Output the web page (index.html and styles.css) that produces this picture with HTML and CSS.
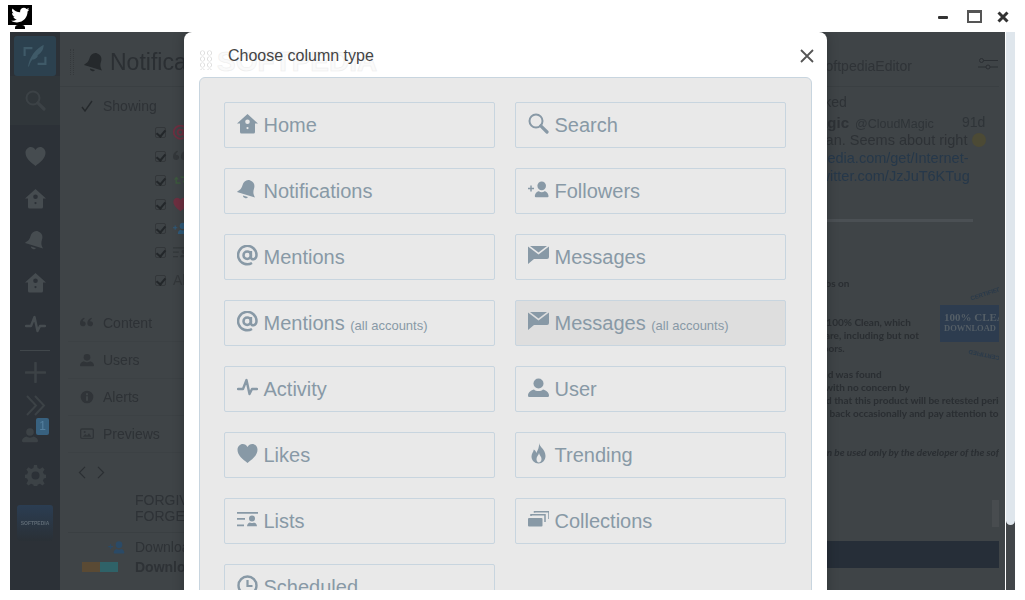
FILE: index.html
```html
<!DOCTYPE html>
<html lang="en">
<head>
<meta charset="utf-8">
<title>TweetDeck</title>
<link rel="stylesheet" href="styles.css">
</head>
<body>
<svg class="defs" aria-hidden="true">
  <symbol id="i-home" viewBox="0 0 21 21"><path fill-rule="evenodd" d="M10.5 1 21 10.5h-3V19a1.500 1.500 0 0 1-1.500 1.500h-12A1.500 1.500 0 0 1 3 19v-8.500H0zM10.500 6.500a2.300 2.300 0 1 0 0 4.600 2.300 2.300 0 0 0 0-4.600zM10.500 14a1.100 1.100 0 1 0 0 2.200 1.100 1.100 0 0 0 0-2.200z"/></symbol>
  <symbol id="i-bell" viewBox="0 0 21 21"><g transform="rotate(17 10.500 10.500)"><path d="M10.500 1c4 0 6 3 6 7 0 4.500 1.500 5.500 3.500 8H1c2-2.500 3.500-3.500 3.500-8 0-4 2-7 6-7z"/><path d="M8 17.500h5a2.500 2 0 0 1-5 0z"/></g></symbol>
  <symbol id="i-search" viewBox="0 0 21 21"><circle cx="8" cy="8" r="6.500" fill="none" stroke="currentColor" stroke-width="2"/><path d="M12.800 12.800 19 19" stroke="currentColor" stroke-width="3.200" stroke-linecap="round"/></symbol>
  <symbol id="i-follow" viewBox="0 0 23 21"><path d="M0 8.500h2.500V6h1.600v2.500h2.500v1.600H4.100v2.500H2.500v-2.500H0z"/><circle cx="15" cy="6.500" r="4.700"/><path d="M7.500 18c0-3.500 3-5.500 4.500-5.500.8.700 1.800 1 3 1s2.200-.3 3-1c1.500 0 4.500 2 4.500 5.500 0 .6-.4 1-1 1h-13c-.6 0-1-.4-1-1z"/></symbol>
  <symbol id="i-at" viewBox="0 0 21 21"><g fill="none" stroke="currentColor" stroke-width="2.500"><circle cx="10.200" cy="10.200" r="3.700"/><path d="M13.900 6v6c0 3.500 5.600 3 5.600-2A9.200 9.200 0 1 0 15 18"/></g></symbol>
  <symbol id="i-msg" viewBox="0 0 21 21"><path d="M2 1h17l-8.500 6.500z"/><path d="M0 1.500 10.500 9.500 21 1.500V12a2 2 0 0 1-2 2H6l-6 5z"/></symbol>
  <symbol id="i-activity" viewBox="0 0 21 21"><path d="M1 12h5l3.500-9 3 14 2.500-5h5" fill="none" stroke="currentColor" stroke-width="2.400" stroke-linecap="round" stroke-linejoin="round"/></symbol>
  <symbol id="i-user" viewBox="0 0 21 21"><circle cx="10.500" cy="6.500" r="5"/><path d="M0 18.500c0-3.500 3.500-5.500 6-6 1 1 2.700 1.500 4.500 1.500s3.500-.5 4.500-1.500c2.500.5 6 2.500 6 6 0 1-.7 1.500-1.500 1.500h-18C.7 20 0 19.500 0 18.500z"/></symbol>
  <symbol id="i-heart" viewBox="0 0 21 21"><path d="M10.500 20C6 16.500.5 12.500.5 6.800.5 3.500 3 1 5.800 1c2 0 3.700 1 4.700 3 1-2 2.700-3 4.700-3 2.800 0 5.300 2.500 5.300 5.800 0 5.700-5.500 9.700-10 13.200z"/></symbol>
  <symbol id="i-flame" viewBox="0 0 21 21"><path fill-rule="evenodd" d="M11 0c.5 4 6.500 6.500 6.500 13 0 4.500-3.300 7.500-7 7.500s-7-3-7-7c0-3 2-4.500 2.300-7 1.500.8 2.300 2 2.500 3.500C9.800 7 11.500 4 11 0zM11 10c-.2 2-2.500 3.500-2.500 6 0 2 1 3.500 2.300 3.500 1.500 0 2.700-1.500 2.700-3.500 0-2.500-2.200-3.800-2.500-6z"/></symbol>
  <symbol id="i-lists" viewBox="0 0 21 21"><path d="M0 3h21v1.800H0zM0 9h8v1.800H0zM0 15.500h7v1.800H0z"/><circle cx="15" cy="9.500" r="3"/><path d="M10 17.300c0-2.500 2-3.500 3-3.800.6.400 1.200.6 2 .6s1.400-.2 2-.6c1 .3 3 1.300 3 3.800z"/></symbol>
  <symbol id="i-coll" viewBox="0 0 21 21"><rect x="0" y="9" width="14.500" height="8.500" rx="1"/><path d="M3 7V5.700h14V13M6.500 3.800V2.800H21V10" fill="none" stroke="currentColor" stroke-width="1.500"/></symbol>
  <symbol id="i-clock" viewBox="0 0 21 21"><circle cx="10.500" cy="10.500" r="9" fill="none" stroke="currentColor" stroke-width="2.400"/><path d="M10.500 5v6h5" fill="none" stroke="currentColor" stroke-width="2.200"/></symbol>
  <symbol id="i-quote" viewBox="0 0 21 21"><path d="M0 11c0-4 2-7 6-8.500l1 1.500C5 5 4.200 6.300 4.200 8c3 0 4.300 1.500 4.300 3.500S7 15.500 4.500 15.500 0 14 0 11zM11 11c0-4 2-7 6-8.500l1 1.500c-2 1-2.800 2.300-2.800 4 3 0 4.300 1.500 4.300 3.500S18 15.500 15.500 15.500 11 14 11 11z"/></symbol>
  <symbol id="i-info" viewBox="0 0 21 21"><path fill-rule="evenodd" d="M10.500 1a9.500 9.500 0 1 1 0 19 9.500 9.500 0 0 1 0-19zM9 5v3h3V5zM9 9.500V16h3V9.500z"/></symbol>
  <symbol id="i-image" viewBox="0 0 21 21"><rect x="1" y="3" width="19" height="14" rx="2" fill="none" stroke="currentColor" stroke-width="2"/><path d="M4 14.500l4-4 2.500 2.500 3-3.500 3.500 5z"/><circle cx="7" cy="7.500" r="1.500"/></symbol>
  <symbol id="i-rt" viewBox="0 0 21 21"><path d="M5 5 1 9h2.500v6h8l-2-2H5.500V9H8zM16 15l4-4h-2.500V5h-8l2 2h4.500v4H13z"/></symbol>
  <symbol id="i-gear" viewBox="0 0 21 21"><path fill-rule="evenodd" d="M9 0h3l.6 3 2.300 1 2.600-1.700 2.100 2.100-1.700 2.600 1 2.300 3 .6v3l-3 .6-1 2.300 1.700 2.600-2.100 2.100-2.600-1.700-2.300 1-.6 3H9l-.6-3-2.300-1-2.600 1.700-2.100-2.100 1.700-2.600-1-2.300-3-.6v-3l3-.6 1-2.300L1.400 4.400l2.100-2.100 2.600 1.700 2.300-1zM10.500 6.500a4 4 0 1 0 0 8 4 4 0 0 0 0-8z"/></symbol>
</svg>

<header class="titlebar">
  <div class="logo">
    <svg class="logo-screen" viewBox="0 0 24 20"><rect width="24" height="20" fill="#000"/><path transform="translate(2.500 .5) scale(.8)" fill="#fff" d="M23.643 4.937c-.835.37-1.732.62-2.675.733.962-.576 1.700-1.490 2.048-2.578-.9.534-1.897.922-2.958 1.130-.85-.904-2.060-1.470-3.400-1.470-2.572 0-4.658 2.086-4.658 4.660 0 .364.042.718.12 1.060-3.873-.195-7.304-2.050-9.602-4.868-.4.690-.63 1.490-.63 2.342 0 1.616.823 3.043 2.072 3.878-.764-.025-1.482-.234-2.110-.583v.06c0 2.257 1.605 4.140 3.737 4.568-.392.106-.803.162-1.227.162-.3 0-.593-.028-.877-.082.593 1.850 2.313 3.198 4.352 3.234-1.595 1.250-3.604 1.995-5.786 1.995-.376 0-.747-.022-1.112-.065 2.062 1.323 4.510 2.093 7.140 2.093 8.570 0 13.255-7.098 13.255-13.254 0-.2-.005-.402-.014-.602.91-.658 1.700-1.477 2.323-2.410z"/></svg>
    <span class="logo-stand"></span>
  </div>
  <div class="winctl">
    <span class="win-min"></span>
    <span class="win-max"></span>
    <svg class="win-close" viewBox="0 0 12 12"><path d="M1.500 1.500l9 9M10.500 1.500l-9 9" stroke="#333" stroke-width="3"/></svg>
  </div>
</header>

<div class="stage">
  <div class="app">
    <nav class="sidebar">
      <div class="nav-compose"><span class="compose-box"><svg viewBox="0 0 30 28"><path d="M12 5H3v9M18 23h9v-8" fill="none" stroke="currentColor" stroke-width="2.500"/><path d="M7 26C9 14 16 6 25 1c0 7-4 10-7 12 1 2-3 5-6 5-2 2-3 5-4 8z"/></svg></span></div>
      <div class="nav-search"><svg class="nav-ic dim"><use href="#i-search"/></svg></div>
      <div class="nav-item first"><svg class="nav-ic"><use href="#i-heart"/></svg></div>
      <div class="nav-item"><svg class="nav-ic"><use href="#i-home"/></svg></div>
      <div class="nav-item"><svg class="nav-ic"><use href="#i-bell"/></svg></div>
      <div class="nav-item"><svg class="nav-ic"><use href="#i-home"/></svg></div>
      <div class="nav-item"><svg class="nav-ic"><use href="#i-activity"/></svg></div>
      <div class="nav-rule"></div>
      <div class="nav-small plus"><svg class="nav-ic dim" viewBox="0 0 21 21"><path d="M10.500 1v19M1 10.500h19" stroke="currentColor" stroke-width="2.600" stroke-linecap="round"/></svg></div>
      <div class="nav-small chev"><svg class="nav-ic dim" viewBox="0 0 21 21"><path d="M2 1l9 9.500-9 9.500M10 1l9 9.500-9 9.500" fill="none" stroke="currentColor" stroke-width="2"/></svg></div>
      <div class="nav-small acct"><svg class="nav-ic dim acct-ic"><use href="#i-user"/></svg><span class="badge">1</span></div>
      <div class="nav-gear"><svg class="nav-ic dim"><use href="#i-gear"/></svg></div>
      <div class="nav-avatar"><span>SOFTPEDIA</span></div>
    </nav>

    <section class="col col-left">
      <div class="col-head">
        <span class="grip"></span>
        <svg class="head-ic"><use href="#i-bell"/></svg>
        <h2 class="head-title">Notifications</h2>
      </div>
      <div class="showing"><svg class="tick" viewBox="0 0 12 12"><path d="M1 7l3 4 7-10" fill="none" stroke="currentColor" stroke-width="1.400"/></svg><span>Showing</span></div>
      <ul class="checks">
        <li><span class="cb"></span><svg class="ck-ic red"><use href="#i-at"/></svg></li>
        <li><span class="cb"></span><svg class="ck-ic"><use href="#i-quote"/></svg></li>
        <li><span class="cb"></span><svg class="ck-ic green"><use href="#i-rt"/></svg></li>
        <li><span class="cb"></span><svg class="ck-ic red"><use href="#i-heart"/></svg></li>
        <li><span class="cb"></span><svg class="ck-ic blue"><use href="#i-follow"/></svg></li>
        <li><span class="cb"></span><svg class="ck-ic"><use href="#i-lists"/></svg></li>
        <li class="last"><span class="cb"></span><span class="ck-text">All</span></li>
      </ul>
      <ul class="sections">
        <li><svg class="sec-ic"><use href="#i-quote"/></svg>Content</li>
        <li><svg class="sec-ic"><use href="#i-user"/></svg>Users</li>
        <li><svg class="sec-ic"><use href="#i-info"/></svg>Alerts</li>
        <li><svg class="sec-ic"><use href="#i-image"/></svg>Previews</li>
      </ul>
      <div class="pager"><svg viewBox="0 0 28 14"><path d="M7 1 1 7l6 6M21 1l6 6-6 6" fill="none" stroke="currentColor" stroke-width="1.300"/></svg></div>
      <div class="stream">
        <p class="forgive">FORGIVE<br>FORGET</p>
        <div class="dl-row"><svg class="dl-ic"><use href="#i-follow"/></svg><span>Download</span></div>
        <div class="dl-card"><span class="thumb"></span><strong>Download</strong></div>
      </div>
    </section>

    <section class="col col-right">
      <div class="r-head"><span>@SoftpediaEditor</span><svg class="sliders" viewBox="0 0 20 12"><g fill="none" stroke="currentColor"><circle cx="3.500" cy="2.500" r="2"/><path d="M5.500 2.500H20M0 9h8M12 9h8"/><circle cx="10" cy="9" r="2"/></g></svg></div>
      <div class="r-liked">liked</div>
      <div class="r-who"><b>CloudMagic</b><span class="handle">@CloudMagic</span><span class="age">91d</span></div>
      <div class="r-line">Woman. Seems about right <span class="emoji"></span></div>
      <div class="r-line link">softpedia.com/get/Internet-</div>
      <div class="r-line link">pic.twitter.com/JzJuT6KTug</div>
      <div class="r-progress"></div>
      <div class="cert">
        <p class="cert-p first">labs on</p>
        <div class="cert-badge"><span class="ribbon top">CERTIFIED</span><div class="cert-box"><b>100% CLEAN</b><b class="small">DOWNLOAD</b></div><span class="ribbon bot">CERTIFIED</span></div>
        <p class="cert-p second">is 100% Clean, which<br>ware, including but not<br>doors.</p>
        <p class="cert-p">and was found<br>d with no concern by<br>ted that this product will be retested periodically<br>ck back occasionally and pay attention to the date</p>
        <p class="cert-p ital">can be used only by the developer of the software</p>
      </div>
      <span class="r-thumb"></span>
      <div class="r-bar"></div>
    </section>

    <div class="modal">
      <div class="modal-head">
        <span class="wm" aria-hidden="true"><i class="wm-dots"></i>SOFTPEDIA</span>
        <h1 class="modal-title">Choose column type</h1>
        <svg class="modal-x" viewBox="0 0 14 14"><path d="M1 1l12 12M13 1 1 13" stroke="#555" stroke-width="1.800"/></svg>
      </div>
      <div class="panel">
        <a class="opt"><svg class="oi"><use href="#i-home"/></svg>Home</a>
        <a class="opt"><svg class="oi"><use href="#i-search"/></svg>Search</a>
        <a class="opt"><svg class="oi"><use href="#i-bell"/></svg>Notifications</a>
        <a class="opt"><svg class="oi"><use href="#i-follow"/></svg>Followers</a>
        <a class="opt"><svg class="oi"><use href="#i-at"/></svg>Mentions</a>
        <a class="opt"><svg class="oi"><use href="#i-msg"/></svg>Messages</a>
        <a class="opt"><svg class="oi"><use href="#i-at"/></svg>Mentions <small>(all accounts)</small></a>
        <a class="opt hover"><svg class="oi"><use href="#i-msg"/></svg>Messages <small>(all accounts)</small></a>
        <a class="opt"><svg class="oi"><use href="#i-activity"/></svg>Activity</a>
        <a class="opt"><svg class="oi"><use href="#i-user"/></svg>User</a>
        <a class="opt"><svg class="oi"><use href="#i-heart"/></svg>Likes</a>
        <a class="opt"><svg class="oi"><use href="#i-flame"/></svg>Trending</a>
        <a class="opt"><svg class="oi"><use href="#i-lists"/></svg>Lists</a>
        <a class="opt"><svg class="oi"><use href="#i-coll"/></svg>Collections</a>
        <a class="opt"><svg class="oi"><use href="#i-clock"/></svg>Scheduled</a>
      </div>
    </div>
  </div>
  <div class="scroll"><div class="scroll-thumb"></div></div>
</div>
</body>
</html>
```

FILE: styles.css
```css
* { box-sizing: border-box; }
html, body { margin: 0; height: 100%; background: #fff; overflow: hidden; }
body { font-family: "Liberation Sans", Arial, sans-serif; color: #2e3236; }
ul { list-style: none; margin: 0; padding: 0; }
p, h1, h2 { margin: 0; font-weight: normal; }
.defs { position: absolute; width: 0; height: 0; }

/* title bar */
.titlebar { height: 32px; display: flex; justify-content: space-between; padding: 5px 16px 0 8px; }
.logo { width: 24px; display: flex; flex-direction: column; align-items: center; }
.logo-screen { width: 24px; height: 20px; display: block; }
.logo-stand { width: 10px; height: 4px; background: #000; border-radius: 3px 3px 0 0; }
.winctl { display: flex; align-items: flex-start; }
.win-min { width: 10px; height: 3px; background: #333; margin: 11px 19px 0 0; border-radius: 1px; }
.win-max { width: 15px; height: 13px; border: 2px solid #555; border-top-width: 3px; margin: 5px 15px 0 0; }
.win-close { width: 12px; height: 12px; margin-top: 6px; }

/* stage */
.stage { margin-left: 10px; width: 1005px; height: 558px; display: flex; overflow: hidden; }
.app { position: relative; width: 995px; display: flex; background: #3f4447; overflow: hidden; }
.scroll { margin-left: 1px; width: 9px; background: #424649; }
.scroll-thumb { height: 493px; background: #dfe6ec; border-radius: 0 0 5px 5px; }

/* sidebar */
.sidebar { width: 50px; flex: none; background: #2c3137; color: #464c50; display: flex; flex-direction: column; align-items: center; filter: blur(.3px); }
.nav-compose { width: 50px; height: 44px; padding: 4px 4px 0; }
.compose-box { display: flex; height: 40px; background: #2c414f; border-radius: 3px; align-items: center; justify-content: center; color: #3f5a68; }
.compose-box svg { width: 26px; height: 26px; fill: currentColor; }
.nav-search { width: 50px; height: 49px; background: #30363a; display: flex; align-items: center; justify-content: center; }
.nav-ic { width: 21px; height: 21px; fill: currentColor; display: block; }
.nav-ic.dim { color: #3c4246; }
.nav-item { height: 42px; display: flex; align-items: center; }
.nav-item.first { margin-top: 10px; }
.nav-rule { width: 30px; height: 1px; background: #41474b; margin-top: 5px; flex: none; }
.nav-small { height: 33px; display: flex; align-items: center; position: relative; flex: none; }
.nav-small.plus { height: 43px; }
.nav-small.chev { height: 22px; }
.nav-small.acct { height: 28px; margin-top: 5px; }
.acct-ic { width: 16px; height: 16px; margin: 0 9px 0 -1px; }
.badge { position: absolute; left: 13px; top: -3px; width: 13px; height: 17px; background: #38617f; color: #55809f; font-size: 12px; line-height: 17px; text-align: center; border-radius: 2px; }
.nav-gear { height: 36px; margin-top: 8px; display: flex; align-items: center; }
.nav-avatar { width: 36px; height: 36px; margin-top: 12px; border-radius: 3px; background: linear-gradient(#2b3d52, #2a3036); display: flex; align-items: center; justify-content: center; }
.nav-avatar span { font-size: 5px; font-weight: bold; color: #5e6a74; }

/* left column */
.col { filter: blur(.35px); }
.col-left { flex: 1; min-width: 0; overflow: hidden; }
.col-head { height: 55px; border-bottom: 1px solid #3a3f42; display: flex; align-items: center; padding: 6px 0 0 10px; }
.grip { width: 4px; height: 26px; border-left: 1px dotted #35393c; border-right: 1px dotted #35393c; margin-right: 10px; }
.head-ic { width: 21px; height: 21px; fill: #25292c; margin-right: 5px; flex: none; }
.head-title { font-size: 23px; color: #2b2f33; white-space: nowrap; }
.showing { height: 33px; padding: 5px 0 0 21px; display: flex; align-items: center; font-size: 14px; color: #2e3236; }
.tick { width: 12px; height: 12px; margin-right: 10px; color: #25292c; }
.checks { padding-left: 95px; }
.checks li { height: 24px; display: flex; align-items: center; gap: 7px; }
.checks li.last { height: 28px; padding-top: 4px; }
.cb { width: 11px; height: 11px; flex: none; border: 1px solid #33373a; border-radius: 2px; position: relative; }
.cb::after { content: ""; position: absolute; left: 2px; top: 0; width: 4px; height: 7px; border: solid #23272a; border-width: 0 2px 2px 0; transform: rotate(40deg); }
.ck-ic { width: 15px; height: 15px; fill: #33373a; color: #33373a; flex: none; }
.ck-ic.red { fill: #6d2f40; color: #6d2f40; }
.ck-ic.green { fill: #3d5a3e; color: #3d5a3e; }
.ck-ic.blue { fill: #2f5a7a; color: #2f5a7a; }
.ck-text { font-size: 14px; color: #33373a; }
.sections { margin: 13px 0 0 8px; }
.sections li { height: 37px; display: flex; align-items: center; padding-left: 12px; border-bottom: 1px solid #3c4144; font-size: 14px; color: #2e3236; }
.sec-ic { width: 14px; height: 14px; fill: #303438; color: #303438; margin-right: 9px; }
.pager { height: 38px; padding-left: 18px; display: flex; align-items: center; color: #2b2f33; }
.pager svg { width: 27px; height: 13px; }
.stream { margin-left: 8px; font-size: 14px; color: #2e3236; }
.forgive { padding-left: 67px; line-height: 16px; padding-top: 1px; height: 42px; border-bottom: 1px solid #3a3f42; }
.dl-row { height: 28px; display: flex; align-items: center; padding-left: 40px; gap: 10px; }
.dl-ic { width: 17px; height: 15px; fill: #2b4a66; }
.dl-card { height: 11px; display: flex; padding-left: 14px; overflow: hidden; }
.thumb { width: 36px; height: 12px; margin: 1px 17px 0 0; flex: none; background: linear-gradient(90deg, #5a4a34 50%, #2f6268 50%); }
.dl-card strong { margin-top: -2px; }

/* right column */
.col-right { width: 185px; flex: none; position: relative; margin-right: 6px; overflow: hidden; font-size: 14.5px; color: #2e3236; white-space: nowrap; }
.r-head { height: 55px; padding: 26px 0 0 0; font-size: 14px; border-bottom: 1px solid #3a3f42; position: relative; margin-left: -12px; color: #2f3337; }
.sliders { position: absolute; right: 1px; top: 26px; width: 20px; height: 12px; color: #2b2f33; }
.r-liked { padding-top: 7px; height: 26px; font-size: 14px; margin-left: 4px; }
.r-who { height: 18px; margin-left: -50px; padding-top: 1px; position: relative; font-size: 15px; }
.handle { font-size: 12.5px; margin-left: 6px; color: #2f3438; }
.age { position: absolute; left: 198px; top: 1px; font-size: 14px; color: #2f3438; }
.r-line { height: 18px; line-height: 18px; margin-left: -22px; }
.r-line.link { color: #26384a; margin-left: -18px; }
.r-line.link + .r-line.link { margin-left: -21px; }
.emoji { display: inline-block; width: 14px; height: 14px; border-radius: 50%; background: #4c4a35; vertical-align: -2px; margin-left: 1px; }
.r-progress { height: 3px; width: 152px; margin: 34px 0 0 7px; background: #4b5054; }
.cert { position: relative; font-size: 10px; line-height: 13px; color: #2a2e32; margin-top: 8px; padding-top: 49px; }
.cert-p { margin-bottom: 13px; font-family: Lato, "Liberation Sans", sans-serif; margin-left: 3px; font-size: 10px; font-weight: bold; }
.cert-p.first { margin: -2px 0 26px 4px; }
.cert-p.ital { font-style: italic; margin-top: 26px; }
.cert-badge { position: absolute; left: 126px; top: 60px; width: 90px; }
.cert-box { height: 37px; width: 60px; background: #2d3c4f; color: #545e66; font-family: "Liberation Serif", serif; padding: 6px 0 0 4px; margin-top: 7px; overflow: hidden; }
.cert-box b { display: block; font-size: 11px; line-height: 12px; white-space: nowrap; }
.cert-box b.small { font-size: 8.500px; line-height: 11px; }
.ribbon { display: block; font-size: 6px; line-height: 8px; color: #2a3a4a; padding-left: 30px; font-weight: bold; }
.ribbon.top { transform: rotate(-18deg); }
.ribbon.bot { transform: rotate(192deg); margin-top: 9px; }
.r-thumb { position: absolute; right: 0; top: 468px; width: 7px; height: 27px; background: #484c4f; }
.r-bar { position: absolute; left: 0; right: 0; top: 509px; height: 27px; background: #262e38; }

/* modal */
.modal { position: absolute; left: 174px; top: 0; width: 643px; height: 700px; background: #fff; border-radius: 8px 8px 0 0; padding: 0 15px; box-shadow: 0 0 12px rgba(0, 0, 0, .25); }
.modal-head { height: 45px; position: relative; display: flex; align-items: center; padding: 3px 0 0 29px; }
.modal-title { font-size: 16px; color: #444; position: relative; }
.modal-x { position: absolute; right: -2px; top: 17px; width: 14px; height: 14px; }
.wm { position: absolute; left: 0; top: 15px; font-size: 28px; font-weight: bold; line-height: 30px; padding-left: 18px; color: #fafafa; -webkit-text-stroke: .5px #ececec; white-space: nowrap; }
.wm-dots { position: absolute; left: 0; top: 3px; width: 15px; height: 20px; background: radial-gradient(circle at 50% 50%, transparent 1.500px, #ddd 2px, transparent 3px) 0 0 / 7px 6px; }
.panel { display: grid; grid-template-columns: 271px 271px; column-gap: 20px; row-gap: 20px; align-content: start; width: 613px; height: 640px; padding: 24px; background: #e9e9e9; border: 1px solid #c8d5df; border-radius: 6px 6px 0 0; }
.opt { height: 46px; display: flex; align-items: center; padding-left: 12px; border: 1px solid #c8d5df; border-radius: 2px; font-size: 20px; line-height: 24px; color: #8899a6; white-space: pre; }
.opt.hover { background: #dedede; }
.opt small { font-size: 13px; padding-top: 5px; }
.oi { width: 21px; height: 21px; flex: none; fill: currentColor; color: #8899a6; margin: -3px 5.5px 0 0; }
```
